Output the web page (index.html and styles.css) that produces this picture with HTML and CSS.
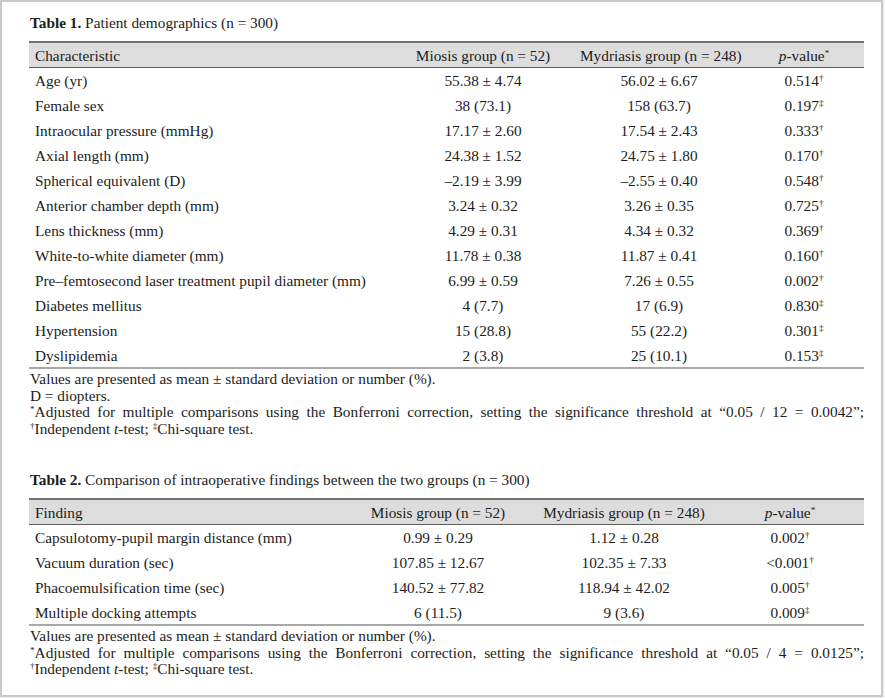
FILE: index.html
```html
<!DOCTYPE html>
<html>
<head>
<meta charset="utf-8">
<link rel="stylesheet" href="styles.css">
</head>
<body>
<div class="frame">
  <section class="block">
    <p class="caption"><b>Table 1.</b> Patient demographics (n = 300)</p>
    <table class="data t1">
      <colgroup><col class="c1"><col class="c2"><col class="c3"><col class="c4"></colgroup>
      <thead>
        <tr><th class="lab">Characteristic</th><th>Miosis group (n = 52)</th><th>Mydriasis group (n = 248)</th><th><i>p</i>-value<sup>*</sup></th></tr>
      </thead>
      <tbody>
        <tr><td class="lab">Age (yr)</td><td>55.38 ± 4.74</td><td>56.02 ± 6.67</td><td>0.514<sup>†</sup></td></tr>
        <tr><td class="lab">Female sex</td><td>38 (73.1)</td><td>158 (63.7)</td><td>0.197<sup>‡</sup></td></tr>
        <tr><td class="lab">Intraocular pressure (mmHg)</td><td>17.17 ± 2.60</td><td>17.54 ± 2.43</td><td>0.333<sup>†</sup></td></tr>
        <tr><td class="lab">Axial length (mm)</td><td>24.38 ± 1.52</td><td>24.75 ± 1.80</td><td>0.170<sup>†</sup></td></tr>
        <tr><td class="lab">Spherical equivalent (D)</td><td>–2.19 ± 3.99</td><td>–2.55 ± 0.40</td><td>0.548<sup>†</sup></td></tr>
        <tr><td class="lab">Anterior chamber depth (mm)</td><td>3.24 ± 0.32</td><td>3.26 ± 0.35</td><td>0.725<sup>†</sup></td></tr>
        <tr><td class="lab">Lens thickness (mm)</td><td>4.29 ± 0.31</td><td>4.34 ± 0.32</td><td>0.369<sup>†</sup></td></tr>
        <tr><td class="lab">White-to-white diameter (mm)</td><td>11.78 ± 0.38</td><td>11.87 ± 0.41</td><td>0.160<sup>†</sup></td></tr>
        <tr><td class="lab">Pre–femtosecond laser treatment pupil diameter (mm)</td><td>6.99 ± 0.59</td><td>7.26 ± 0.55</td><td>0.002<sup>†</sup></td></tr>
        <tr><td class="lab">Diabetes mellitus</td><td>4 (7.7)</td><td>17 (6.9)</td><td>0.830<sup>‡</sup></td></tr>
        <tr><td class="lab">Hypertension</td><td>15 (28.8)</td><td>55 (22.2)</td><td>0.301<sup>‡</sup></td></tr>
        <tr class="last"><td class="lab">Dyslipidemia</td><td>2 (3.8)</td><td>25 (10.1)</td><td>0.153<sup>‡</sup></td></tr>
      </tbody>
    </table>
    <div class="notes">
      <div>Values are presented as mean ± standard deviation or number (%).</div>
      <div>D = diopters.</div>
      <div class="just"><sup>*</sup>Adjusted for multiple comparisons using the Bonferroni correction, setting the significance threshold at “0.05 / 12 = 0.0042”;</div>
      <div><sup>†</sup>Independent <i>t</i>-test; <sup>‡</sup>Chi-square test.</div>
    </div>
  </section>

  <section class="block second">
    <p class="caption"><b>Table 2.</b> Comparison of intraoperative findings between the two groups (n = 300)</p>
    <table class="data t2">
      <colgroup><col class="c1"><col class="c2"><col class="c3"><col class="c4"></colgroup>
      <thead>
        <tr><th class="lab">Finding</th><th>Miosis group (n = 52)</th><th>Mydriasis group (n = 248)</th><th><i>p</i>-value<sup>*</sup></th></tr>
      </thead>
      <tbody>
        <tr><td class="lab">Capsulotomy-pupil margin distance (mm)</td><td>0.99 ± 0.29</td><td>1.12 ± 0.28</td><td>0.002<sup>†</sup></td></tr>
        <tr><td class="lab">Vacuum duration (sec)</td><td>107.85 ± 12.67</td><td>102.35 ± 7.33</td><td>&lt;0.001<sup>†</sup></td></tr>
        <tr><td class="lab">Phacoemulsification time (sec)</td><td>140.52 ± 77.82</td><td>118.94 ± 42.02</td><td>0.005<sup>†</sup></td></tr>
        <tr class="last"><td class="lab">Multiple docking attempts</td><td>6 (11.5)</td><td>9 (3.6)</td><td>0.009<sup>‡</sup></td></tr>
      </tbody>
    </table>
    <div class="notes">
      <div>Values are presented as mean ± standard deviation or number (%).</div>
      <div class="just"><sup>*</sup>Adjusted for multiple comparisons using the Bonferroni correction, setting the significance threshold at “0.05 / 4 = 0.0125”;</div>
      <div><sup>†</sup>Independent <i>t</i>-test; <sup>‡</sup>Chi-square test.</div>
    </div>
  </section>
</div>
</body>
</html>
```

FILE: styles.css
```css
html, body {
  margin: 0;
  padding: 0;
  background: #f2f2f2;
}

.frame {
  box-sizing: border-box;
  width: 883px;
  height: 697px;
  background: #ffffff;
  border: 2px solid #c9c9c9;
  padding: 12px 0 0 27px;
  font-family: "Liberation Serif", "Times New Roman", serif;
  font-size: 15.3px;
  color: #1c1c1c;
}

.block {
  width: 835px;
}

.block.second {
  margin-top: 34px;
}

.caption {
  margin: 0 0 10px 1px;
  line-height: 17px;
  font-size: 15.3px;
}

.caption b {
  font-weight: bold;
}

.data {
  width: 835px;
  table-layout: fixed;
  border-collapse: separate;
  border-spacing: 0;
  font-size: 15.3px;
}

.t1 .c1 { width: 363px; }
.t1 .c2 { width: 182px; }
.t1 .c3 { width: 170px; }
.t1 .c4 { width: 120px; }

.t2 .c1 { width: 315px; }
.t2 .c2 { width: 188px; }
.t2 .c3 { width: 184px; }
.t2 .c4 { width: 148px; }

.data th {
  height: 24px;
  padding: 0 6px;
  background: #dddddd;
  border-top: 2px solid #727272;
  border-bottom: 1px solid #5c5c5c;
  font-weight: normal;
  text-align: center;
  white-space: nowrap;
  line-height: 17px;
}

.data td {
  height: 25px;
  padding: 0 6px;
  text-align: center;
  white-space: nowrap;
  line-height: 17px;
  vertical-align: middle;
}

.data .lab {
  text-align: left;
}

.data tr.last td {
  height: 24px;
  border-bottom: 2px solid #a8a8a8;
}

sup {
  font-size: 0.6em;
  line-height: 0;
  vertical-align: 0.5em;
}

.notes {
  margin-top: 2px;
  margin-left: 1px;
  line-height: 16.5px;
}

.notes .just {
  text-align: justify;
  text-align-last: justify;
}
```
